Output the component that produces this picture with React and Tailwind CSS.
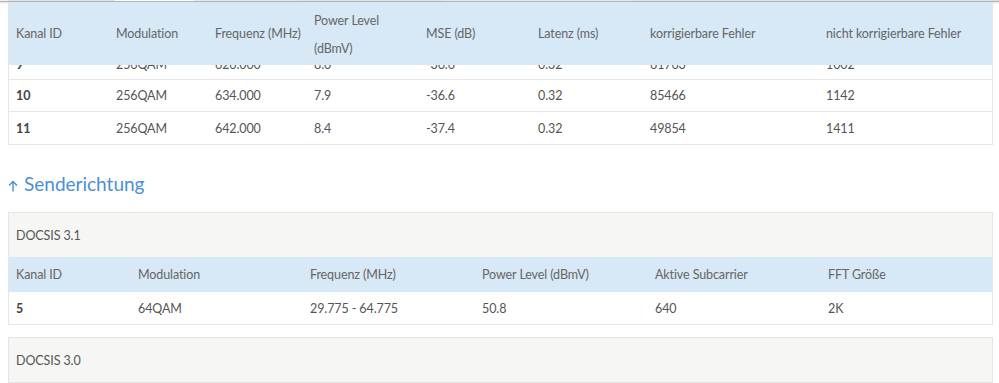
import React from "react";

const downCols = [100, 99, 99, 112, 112, 112, 176, 175];
const downRows = [
  ["9", "256QAM", "626.000", "8.0", "-36.6", "0.32", "61763", "1002"],
  ["10", "256QAM", "634.000", "7.9", "-36.6", "0.32", "85466", "1142"],
  ["11", "256QAM", "642.000", "8.4", "-37.4", "0.32", "49854", "1411"],
];

const upCols = [122, 172, 172, 173, 173, 173];
const upHead = [
  "Kanal ID",
  "Modulation",
  "Frequenz (MHz)",
  "Power Level (dBmV)",
  "Aktive Subcarrier",
  "FFT Größe",
];
const upRow = ["5", "64QAM", "29.775 - 64.775", "50.8", "640", "2K"];

const Row = ({ cols, cells, bold = true, className = "" }) => (
  <div className={`flex pt-[2px] ${className}`}>
    {cells.map((c, i) => (
      <div
        key={i}
        style={{ width: cols[i] }}
        className={`shrink-0 whitespace-nowrap px-[7px] ${
          i === 0 && bold ? "font-bold text-[#444]" : ""
        }`}
      >
        {c}
      </div>
    ))}
  </div>
);

export default function App() {
  return (
    <div className="w-[999px] h-[383px] overflow-hidden bg-white text-[12.5px] tracking-[-0.1px] text-[#555] font-['Lato',sans-serif]">
      {/* tab strip cut at top */}
      <div className="flex h-px bg-[#e2e2e2]">
        <div className="w-[8px] bg-[#f2f2f2]" />
        <div className="w-[106px]" />
        <div className="w-[80px] bg-[#fafafa]" />
        <div className="w-[108px] bg-[#e6e6e6]" />
        <div className="w-[140px]" />
        <div className="w-[190px] bg-[#e8e8e8]" />
      </div>
      <div className="h-px bg-[#b3b3b3] shadow-[0_1px_2px_rgba(0,0,0,0.2)]" />

      <div className="mx-[8px] w-[985px] border-x border-b border-[#e6e6e6]">
        {/* sticky header */}
        <div className="flex h-[63px] items-center pt-[2px] bg-[#d7e8f6] text-[#666]">
          {[
            "Kanal ID",
            "Modulation",
            "Frequenz (MHz)",
            null,
            "MSE (dB)",
            "Latenz (ms)",
            "korrigierbare Fehler",
            "nicht korrigierbare Fehler",
          ].map((h, i) => (
            <div
              key={i}
              style={{ width: downCols[i] }}
              className="shrink-0 whitespace-nowrap px-[7px]"
            >
              {h ?? (
                <div className="leading-[28px]">
                  Power Level
                  <br />
                  (dBmV)
                </div>
              )}
            </div>
          ))}
        </div>

        {/* row scrolled under the header */}
        <div className="h-[15px] overflow-hidden border-b border-[#e6e6e6]">
          <Row
            cols={downCols}
            cells={downRows[0]}
            className="-mt-[17px] h-[32px] items-center"
          />
        </div>
        <Row
          cols={downCols}
          cells={downRows[1]}
          className="h-[32px] items-center border-b border-[#e6e6e6]"
        />
        <Row
          cols={downCols}
          cells={downRows[2]}
          className="h-[32px] items-center"
        />
      </div>

      <h2 className="mt-[19px] ml-[8px] flex items-center gap-[6px] text-[19px] tracking-normal text-[#4a8fd8] leading-[40px]">
        <svg
          width="10"
          height="12"
          viewBox="0 0 10 12"
          fill="none"
          stroke="currentColor"
          strokeWidth="1.4"
          className="mt-[3px]"
        >
          <path d="M5 11.5V1.5M1 5.5L5 1.5L9 5.5" />
        </svg>
        Senderichtung
      </h2>

      <div className="mt-[8px] mx-[8px] w-[985px] border border-[#e6e6e6]">
        <div className="h-[44px] flex items-center px-[7px] pt-[3px] bg-[#f6f6f5]">
          DOCSIS 3.1
        </div>
        <Row
          cols={upCols}
          cells={upHead}
          bold={false}
          className="h-[35px] items-center bg-[#d7e8f6] text-[#666]"
        />
        <Row cols={upCols} cells={upRow} className="h-[32px] items-center" />
      </div>

      <div className="mt-[12px] mx-[8px] w-[985px] border border-[#e6e6e6]">
        <div className="h-[44px] flex items-center px-[7px] pt-[3px] bg-[#f6f6f5]">
          DOCSIS 3.0
        </div>
      </div>
    </div>
  );
}
